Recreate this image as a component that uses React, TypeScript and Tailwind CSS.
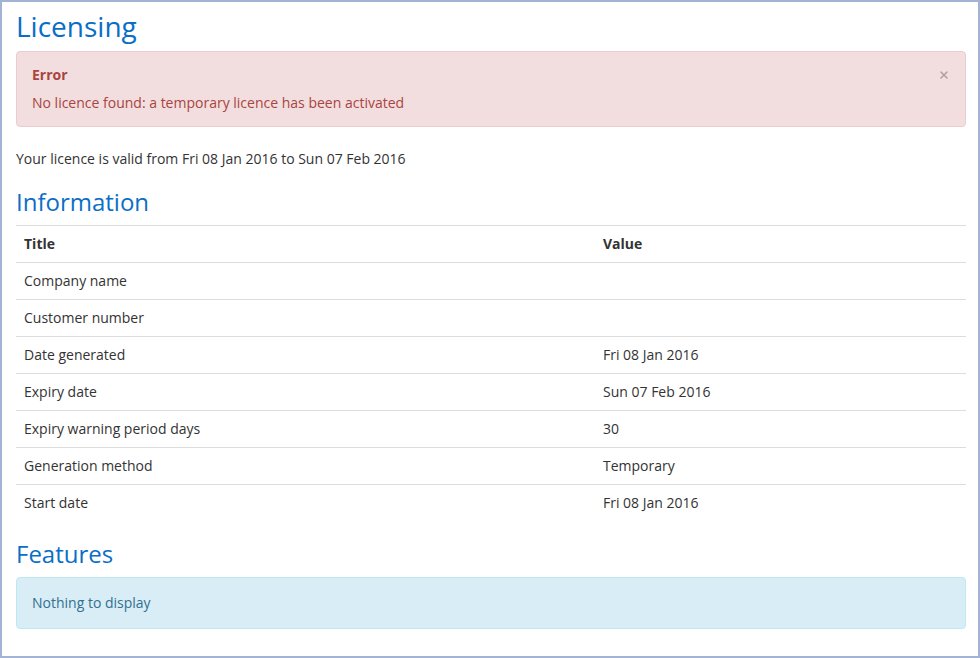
import { X } from "lucide-react";

const rows: [string, string][] = [
  ["Company name", ""],
  ["Customer number", ""],
  ["Date generated", "Fri 08 Jan 2016"],
  ["Expiry date", "Sun 07 Feb 2016"],
  ["Expiry warning period days", "30"],
  ["Generation method", "Temporary"],
  ["Start date", "Fri 08 Jan 2016"],
];

export default function App() {
  return (
    <div
      className="h-[658px] w-[980px] border-2 border-[#a3b3d3] bg-white pl-[14px] pr-[12px] text-[14px] text-[#333] antialiased"
      style={{ fontFamily: '"Open Sans", "Liberation Sans", sans-serif' }}
    >
      <h1 className="mt-[6px] text-[28px] leading-[36px] text-[#0b6ec6]">Licensing</h1>

      <div className="relative mt-[7px] h-[76px] rounded border border-[#ebccd1] bg-[#f2dede] px-[15px] pt-[13px] text-[#a94442]">
        <div className="text-[14px] font-bold leading-[20px]">Error</div>
        <div className="mt-[8px] leading-[20px]">No licence found: a temporary licence has been activated</div>
        <button className="absolute right-[15px] top-[17px] text-[#b79a9a]">
          <X className="h-[12px] w-[12px]" strokeWidth={3} />
        </button>
      </div>

      <p className="mt-[22px] leading-[20px]">Your licence is valid from Fri 08 Jan 2016 to Sun 07 Feb 2016</p>

      <h2 className="mt-[17px] text-[24px] leading-[32px] text-[#0b6ec6]">Information</h2>

      <table className="mt-[7px] w-full border-collapse">
        <thead>
          <tr className="h-[37px] border-t border-[#ddd]">
            <th className="w-[579px] px-2 pb-[2px] text-left font-bold">Title</th>
            <th className="px-2 pb-[2px] text-left font-bold">Value</th>
          </tr>
        </thead>
        <tbody>
          {rows.map(([t, v]) => (
            <tr key={t} className="h-[37px] border-t border-[#ddd]">
              <td className="px-2 pb-[2px]">{t}</td>
              <td className="px-2 pb-[2px]">{v}</td>
            </tr>
          ))}
        </tbody>
      </table>

      <h2 className="mt-[16px] text-[24px] leading-[32px] text-[#0b6ec6]">Features</h2>

      <div className="mt-[7px] flex h-[52px] items-center rounded border border-[#bce8f1] bg-[#d9edf7] px-[15px] text-[#31708f]">
        Nothing to display
      </div>
    </div>
  );
}
